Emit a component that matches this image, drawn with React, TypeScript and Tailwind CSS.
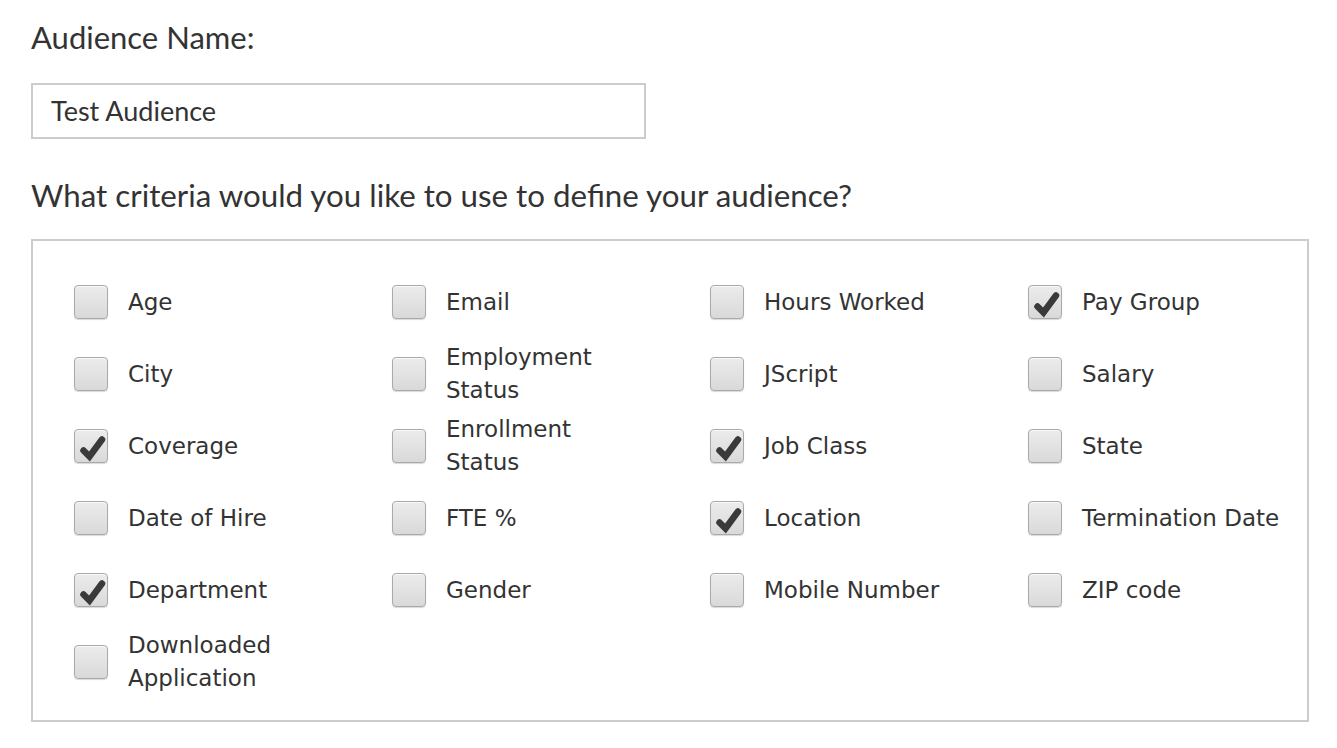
import React from "react";

const items: { label: string[]; checked?: boolean }[][] = [
  [
    { label: ["Age"] },
    { label: ["City"] },
    { label: ["Coverage"], checked: true },
    { label: ["Date of Hire"] },
    { label: ["Department"], checked: true },
    { label: ["Downloaded", "Application"] },
  ],
  [
    { label: ["Email"] },
    { label: ["Employment", "Status"] },
    { label: ["Enrollment", "Status"] },
    { label: ["FTE %"] },
    { label: ["Gender"] },
  ],
  [
    { label: ["Hours Worked"] },
    { label: ["JScript"] },
    { label: ["Job Class"], checked: true },
    { label: ["Location"], checked: true },
    { label: ["Mobile Number"] },
  ],
  [
    { label: ["Pay Group"], checked: true },
    { label: ["Salary"] },
    { label: ["State"] },
    { label: ["Termination Date"] },
    { label: ["ZIP code"] },
  ],
];

function Box({ checked }: { checked?: boolean }) {
  return (
    <div className="relative w-[34px] h-[34px] shrink-0 rounded-[4px] border border-[#a9a9a9] bg-gradient-to-b from-[#ececec] to-[#d9d9d9] shadow-[inset_0_1px_0_#f8f8f8,0_1px_1px_rgba(0,0,0,0.15)]">
      {checked && (
        <svg viewBox="0 0 34 34" className="absolute inset-0 w-[34px] h-[34px]">
          <polyline
            points="8.5,20.5 14.5,26.5 27,9.5"
            fill="none"
            stroke="#3a3a3a"
            strokeWidth="6.5"
            strokeLinecap="round"
            strokeLinejoin="miter"
          />
        </svg>
      )}
    </div>
  );
}

export default function App() {
  const rows = 6;
  const cells: React.ReactNode[] = [];
  for (let r = 0; r < rows; r++) {
    for (let c = 0; c < 4; c++) {
      const it = items[c][r];
      cells.push(
        <div key={`${r}-${c}`} className="flex items-center h-[72px]">
          {it && (
            <>
              <Box checked={it.checked} />
              <div className="ml-[20px] text-[23px] leading-[33px] text-[#333]">
                {it.label.map((l) => (
                  <div key={l}>{l}</div>
                ))}
              </div>
            </>
          )}
        </div>
      );
    }
  }
  return (
    <div
      className="w-[1337px] h-[748px] bg-white pl-[31px] pt-[19px]"
      style={{ fontFamily: '"DejaVu Sans", sans-serif' }}
    >
      <div
        className="text-[31px] leading-[36px] text-[#333]"
        style={{ fontFamily: 'Lato, sans-serif' }}
      >
        Audience Name:
      </div>
      <div className="mt-[28px] w-[615px] h-[56px] border-2 border-[#cccccc] flex items-center pl-[18px]">
        <span
          className="text-[27px] text-[#333]"
          style={{ fontFamily: 'Lato, sans-serif' }}
        >
          Test Audience
        </span>
      </div>
      <div
        className="mt-[38px] text-[31.3px] leading-[36px] text-[#333]"
        style={{ fontFamily: 'Lato, sans-serif' }}
      >
        What criteria would you like to use to define your audience?
      </div>
      <div className="mt-[26px] w-[1278px] h-[483px] border-2 border-[#cccccc] pl-[41px] pt-[25px]">
        <div className="grid grid-cols-[318px_318px_318px_1fr]">{cells}</div>
      </div>
    </div>
  );
}
